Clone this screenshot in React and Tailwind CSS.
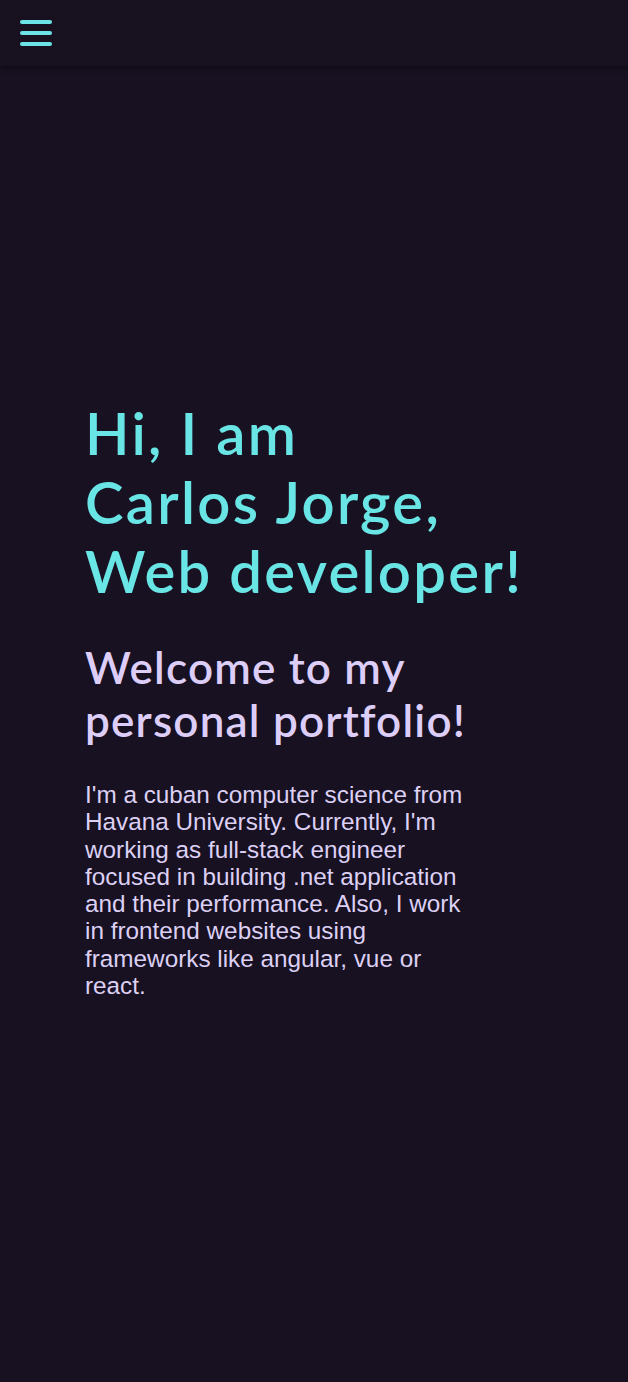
export default function App() {
  return (
    <div className="min-h-[1382px] bg-[#181121] flex flex-col">
      <header className="h-[66px] bg-[#171120] shadow-[0_2px_6px_rgba(0,0,0,0.45)] flex items-center px-[20px] relative z-10">
        <button className="flex flex-col gap-[7px] w-[32px]">
          <span className="block h-[4px] w-[32px] rounded-full bg-[#6ee3e6]" />
          <span className="block h-[4px] w-[32px] rounded-full bg-[#6ee3e6]" />
          <span className="block h-[4px] w-[32px] rounded-full bg-[#6ee3e6]" />
        </button>
      </header>
      <main className="flex-1 pl-[85px] pt-[332px]">
        <h1 className="text-[58px] leading-[69px] font-semibold tracking-[2.3px] text-[#6ae5e6] font-['Lato','Open_Sans',sans-serif]">
          Hi, I am
          <br />
          Carlos Jorge,
          <br />
          Web developer!
        </h1>
        <h2 className="mt-[36px] text-[44px] leading-[53px] font-semibold tracking-[1.2px] text-[#dccef8] font-['Lato','Open_Sans',sans-serif]">
          Welcome to my
          <br />
          personal portfolio!
        </h2>
        <p className="mt-[34px] w-[392px] text-[24.3px] leading-[27.3px] text-[#dcd0f5] font-['Liberation_Sans',Arial,sans-serif]">
          I'm a cuban computer science from Havana University. Currently, I'm working as full-stack engineer focused in building .net application and their performance. Also, I work in frontend websites using frameworks like angular, vue or react.
        </p>
      </main>
    </div>
  );
}
